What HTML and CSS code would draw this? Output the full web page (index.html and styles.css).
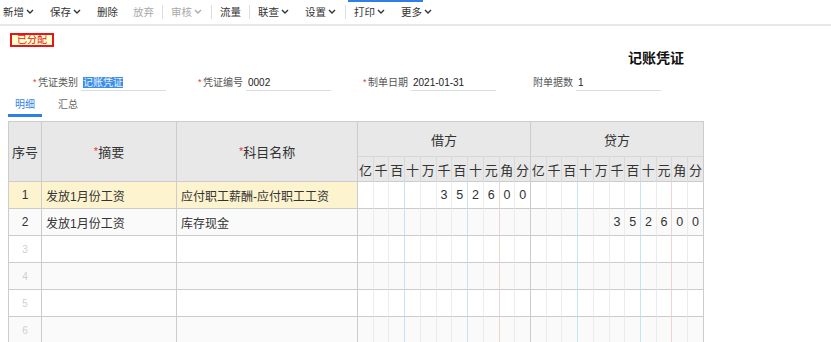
FILE: index.html
```html
<!DOCTYPE html>
<html lang="zh">
<head>
<meta charset="utf-8">
<title>记账凭证</title>
<link rel="stylesheet" href="styles.css">
</head>
<body>
<div class="toolbar">
  <span class="hover-bar"></span>
  <span class="item">新增<svg class="chev" viewBox="0 0 10 6"><polyline points="2,1 5,4 8,1"/></svg></span>
  <span class="item">保存<svg class="chev" viewBox="0 0 10 6"><polyline points="2,1 5,4 8,1"/></svg></span>
  <span class="item">删除</span>
  <span class="item off">放弃</span>
  <span class="sep"></span>
  <span class="item off">审核<svg class="chev" viewBox="0 0 10 6"><polyline points="2,1 5,4 8,1"/></svg></span>
  <span class="sep"></span>
  <span class="item">流量</span>
  <span class="sep"></span>
  <span class="item">联查<svg class="chev" viewBox="0 0 10 6"><polyline points="2,1 5,4 8,1"/></svg></span>
  <span class="item">设置<svg class="chev" viewBox="0 0 10 6"><polyline points="2,1 5,4 8,1"/></svg></span>
  <span class="sep"></span>
  <span class="item">打印<svg class="chev" viewBox="0 0 10 6"><polyline points="2,1 5,4 8,1"/></svg></span>
  <span class="item">更多<svg class="chev" viewBox="0 0 10 6"><polyline points="2,1 5,4 8,1"/></svg></span>
</div>

<div class="badge-row"><span class="badge">已分配</span></div>

<div class="title-row"><h1 class="title">记账凭证</h1></div>

<div class="fields">
  <div class="field"><span class="star">*</span><span class="label">凭证类别</span><span class="input"><span class="selected">记账凭证</span></span></div>
  <div class="field"><span class="star">*</span><span class="label">凭证编号</span><span class="input">0002</span></div>
  <div class="field"><span class="star">*</span><span class="label">制单日期</span><span class="input">2021-01-31</span></div>
  <div class="field"><span class="star hidden">*</span><span class="label">附单据数</span><span class="input">1</span></div>
</div>

<div class="tabs">
  <span class="tab active">明细</span>
  <span class="tab">汇总</span>
</div>

<table class="grid">
  <colgroup>
    <col class="c-no"><col class="c-sum"><col class="c-acc">
    <col class="c-d"><col class="c-d"><col class="c-d"><col class="c-d"><col class="c-d"><col class="c-d"><col class="c-d"><col class="c-d"><col class="c-d"><col class="c-d"><col class="c-d">
    <col class="c-d"><col class="c-d"><col class="c-d"><col class="c-d"><col class="c-d"><col class="c-d"><col class="c-d"><col class="c-d"><col class="c-d"><col class="c-d"><col class="c-d">
  </colgroup>
  <thead>
    <tr class="h1">
      <th rowspan="2" class="main">序号</th>
      <th rowspan="2" class="main"><span class="req">*</span>摘要</th>
      <th rowspan="2" class="main"><span class="req">*</span>科目名称</th>
      <th colspan="11" class="main">借方</th>
      <th colspan="11" class="main">贷方</th>
    </tr>
    <tr class="h2">
      <th class="u m">亿</th><th class="u">千</th><th class="u">百</th><th class="u">十</th><th class="u">万</th><th class="u">千</th><th class="u">百</th><th class="u">十</th><th class="u">元</th><th class="u">角</th><th class="u">分</th>
      <th class="u m">亿</th><th class="u">千</th><th class="u">百</th><th class="u">十</th><th class="u">万</th><th class="u">千</th><th class="u">百</th><th class="u">十</th><th class="u">元</th><th class="u">角</th><th class="u">分</th>
    </tr>
  </thead>
  <tbody>
    <tr class="row current">
      <td class="no">1</td><td class="txt">发放1月份工资</td><td class="txt">应付职工薪酬-应付职工工资</td>
      <td class="d m"></td><td class="d"></td><td class="d"></td><td class="d b"></td><td class="d"></td><td class="d">3</td><td class="d">5</td><td class="d b">2</td><td class="d">6</td><td class="d r">0</td><td class="d">0</td>
      <td class="d m"></td><td class="d"></td><td class="d"></td><td class="d b"></td><td class="d"></td><td class="d"></td><td class="d"></td><td class="d b"></td><td class="d"></td><td class="d r"></td><td class="d"></td>
    </tr>
    <tr class="row alt">
      <td class="no">2</td><td class="txt">发放1月份工资</td><td class="txt">库存现金</td>
      <td class="d m"></td><td class="d"></td><td class="d"></td><td class="d b"></td><td class="d"></td><td class="d"></td><td class="d"></td><td class="d b"></td><td class="d"></td><td class="d r"></td><td class="d"></td>
      <td class="d m"></td><td class="d"></td><td class="d"></td><td class="d b"></td><td class="d"></td><td class="d">3</td><td class="d">5</td><td class="d b">2</td><td class="d">6</td><td class="d r">0</td><td class="d">0</td>
    </tr>
    <tr class="row">
      <td class="no empty">3</td><td class="txt"></td><td class="txt"></td>
      <td class="d m"></td><td class="d"></td><td class="d"></td><td class="d b"></td><td class="d"></td><td class="d"></td><td class="d"></td><td class="d b"></td><td class="d"></td><td class="d r"></td><td class="d"></td>
      <td class="d m"></td><td class="d"></td><td class="d"></td><td class="d b"></td><td class="d"></td><td class="d"></td><td class="d"></td><td class="d b"></td><td class="d"></td><td class="d r"></td><td class="d"></td>
    </tr>
    <tr class="row alt">
      <td class="no empty">4</td><td class="txt"></td><td class="txt"></td>
      <td class="d m"></td><td class="d"></td><td class="d"></td><td class="d b"></td><td class="d"></td><td class="d"></td><td class="d"></td><td class="d b"></td><td class="d"></td><td class="d r"></td><td class="d"></td>
      <td class="d m"></td><td class="d"></td><td class="d"></td><td class="d b"></td><td class="d"></td><td class="d"></td><td class="d"></td><td class="d b"></td><td class="d"></td><td class="d r"></td><td class="d"></td>
    </tr>
    <tr class="row">
      <td class="no empty">5</td><td class="txt"></td><td class="txt"></td>
      <td class="d m"></td><td class="d"></td><td class="d"></td><td class="d b"></td><td class="d"></td><td class="d"></td><td class="d"></td><td class="d b"></td><td class="d"></td><td class="d r"></td><td class="d"></td>
      <td class="d m"></td><td class="d"></td><td class="d"></td><td class="d b"></td><td class="d"></td><td class="d"></td><td class="d"></td><td class="d b"></td><td class="d"></td><td class="d r"></td><td class="d"></td>
    </tr>
    <tr class="row alt">
      <td class="no empty">6</td><td class="txt"></td><td class="txt"></td>
      <td class="d m"></td><td class="d"></td><td class="d"></td><td class="d b"></td><td class="d"></td><td class="d"></td><td class="d"></td><td class="d b"></td><td class="d"></td><td class="d r"></td><td class="d"></td>
      <td class="d m"></td><td class="d"></td><td class="d"></td><td class="d b"></td><td class="d"></td><td class="d"></td><td class="d"></td><td class="d b"></td><td class="d"></td><td class="d r"></td><td class="d"></td>
    </tr>
  </tbody>
</table>
</body>
</html>
```

FILE: styles.css
```css
* { box-sizing: border-box; }

html, body {
  margin: 0;
  padding: 0;
  background: #fff;
  overflow: hidden;
}

body {
  width: 831px;
  height: 342px;
  font-family: "Liberation Sans", "Noto Sans CJK SC", sans-serif;
  color: #333;
}

/* toolbar */
.toolbar {
  position: relative;
  height: 26px;
  padding-left: 3px;
  display: flex;
  align-items: center;
  border-bottom: 2px solid #e8e8e8;
  font-size: 10.5px;
  line-height: 14px;
}

.hover-bar {
  position: absolute;
  left: 348px;
  top: 0;
  width: 75px;
  height: 2px;
  background: #2f7fe6;
}

.item {
  display: flex;
  align-items: center;
  margin-right: 15px;
  color: #333;
  white-space: nowrap;
}

.item.off { color: #aaa; }

.chev {
  width: 10px;
  height: 6px;
  margin-left: 1px;
  fill: none;
  stroke: #333;
  stroke-width: 1.4;
}

.item.off .chev { stroke: #aaa; }

.sep {
  width: 1px;
  height: 14px;
  background: #dcdcdc;
  margin: 0 8px 0 -7px;
}

/* badge */
.badge-row {
  padding: 3px 0 0 10px;
  height: 17px;
}

.badge {
  display: inline-block;
  height: 14px;
  padding: 0 5px;
  border: 2px solid #e4161b;
  background: #ffffcc;
  color: #e4161b;
  font-size: 10px;
  line-height: 10px;
}

/* title */
.title-row {
  padding: 5px 0 0 628px;
  height: 30px;
}

.title {
  margin: 0;
  font-size: 14px;
  line-height: 20px;
  font-weight: bold;
  color: #111;
}

/* fields */
.fields {
  display: flex;
  gap: 32px;
  padding-left: 33px;
  font-size: 10px;
}

.field {
  display: flex;
  align-items: flex-end;
}

.star {
  width: 5px;
  color: #e4393c;
  font-size: 9px;
  line-height: 14px;
  padding-bottom: 2px;
}

.star.hidden { visibility: hidden; }

.label {
  width: 40px;
  line-height: 14px;
  color: #555;
  padding-bottom: 1px;
  white-space: nowrap;
}

.input {
  width: 85px;
  margin-left: 3px;
  padding: 3px 0 0 2px;
  line-height: 14px;
  border-bottom: 1px solid #dcdcdc;
  color: #222;
  white-space: nowrap;
}

.selected {
  background: #3a8ee8;
  color: #eaf2ff;
}

/* tabs */
.tabs {
  display: flex;
  gap: 9px;
  padding-left: 8px;
  margin-top: 7px;
  font-size: 10px;
  line-height: 14px;
}

.tab {
  padding: 0 7px 2px;
  border-bottom: 3px solid transparent;
  color: #666;
}

.tab.active {
  color: #2f7fe6;
  border-bottom-color: #2f7fe6;
}

/* grid */
.grid {
  margin: 4px 0 0 8px;
  width: 696px;
  table-layout: fixed;
  border-collapse: separate;
  border-spacing: 0;
  border-right: 1px solid #cccccc;
}

.c-no { width: 33px; }
.c-sum { width: 135px; }
.c-acc { width: 181px; }
.c-d { width: 15.727px; }

.grid th,
.grid td {
  padding: 0;
  border-left: 1px solid #cccccc;
  border-top: 1px solid #cccccc;
  overflow: hidden;
  white-space: nowrap;
}

.grid th {
  background: #e8e8e8;
  font-weight: normal;
  color: #333;
  font-size: 13px;
}

.h1 { height: 35px; }
.h2 { height: 25px; }

.req {
  color: #e4393c;
  font-size: 11px;
  vertical-align: 2px;
}

.grid th.u {
  font-size: 13px;
  border-left-color: #dadada;
  border-top-color: #d6d6d6;
}

.grid th.u.m { border-left-color: #cccccc; }

.row { height: 27px; }

.grid td {
  font-size: 12px;
  color: #333;
  background: #fff;
}

.row.alt td { background: #fafafa; }

.row.current td.no,
.row.current td.txt { background: #fdf4cf; }

.grid td.no {
  text-align: center;
  font-size: 12px;
}

.grid td.no.empty {
  color: #cfcfcf;
  font-size: 10px;
}

.grid td.txt {
  padding-left: 4px;
}

.grid td.d {
  text-align: center;
  font-size: 12.5px;
  border-left-color: #ececec;
}

.grid td.d.b { border-left-color: #c6e2f5; }
.grid td.d.r { border-left-color: #f3d2d2; }
.grid td.d.m { border-left-color: #cccccc; }
```
